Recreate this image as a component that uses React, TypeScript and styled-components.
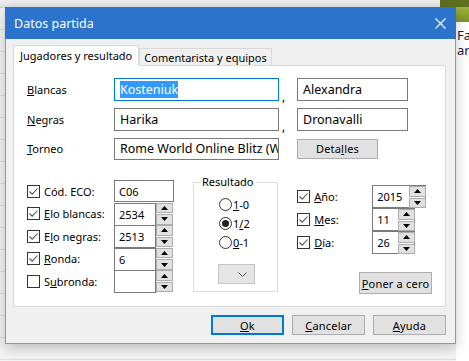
import styled, { createGlobalStyle } from "styled-components";

const GlobalStyle = createGlobalStyle`
  html, body { margin: 0; padding: 0; }
  body {
    width: 469px;
    height: 361px;
    overflow: hidden;
    font-family: "Noto Sans", "Segoe UI", sans-serif;
    font-size: 11px;
    color: #000;
  }
`;

const Desktop = styled.div`
  position: relative;
  width: 469px;
  height: 361px;
  overflow: hidden;
  background: #f4f4f4;
`;

const BackTop = styled.div`
  height: 7px;
  background: linear-gradient(#eeeeee, #e4e4e4);
  border-bottom: 1px solid #d4d4d4;
`;

const BackRows = styled.div`
  display: flex;
  height: 354px;
`;

const BackList = styled.div`
  flex: 1;
  background-color: #f3f3f3;
  background-image: repeating-linear-gradient(
    to bottom,
    transparent 0,
    transparent 21px,
    #dedede 21px,
    #dedede 22px
  );
`;

const BackSide = styled.div`
  width: 12px;
  padding: 20px 0 0 1px;
  background: #fff;
  font-size: 13px;
  line-height: 15px;
  color: #1d1a33;
  white-space: nowrap;
  overflow: hidden;
`;

const Thumb = styled.div`
  position: absolute;
  right: 0;
  top: 0;
  width: 29px;
  height: 22px;
  background: linear-gradient(#5e6f1f 0, #5e6f1f 30%, #9fb437 30%, #7d9328 100%);
`;

const Window = styled.div`
  position: absolute;
  left: 5px;
  top: 7px;
  width: 451px;
  height: 337px;
  box-sizing: border-box;
  background: #f0f0f0;
  border: 1px solid #6f9ee0;
  border-top: none;
  box-shadow: 0 4px 12px rgba(0, 0, 0, 0.22);
  display: flex;
  flex-direction: column;
`;

const TitleBar = styled.div`
  height: 32px;
  margin: 0 -1px;
  background: #2b73cc;
  color: #fff;
  display: flex;
  align-items: center;
  justify-content: space-between;
  padding: 0 10px 0 9px;
  font-size: 12.5px;
`;

const Body = styled.div`
  padding: 6px 9px 0 7px;
`;

const TabStrip = styled.div`
  display: flex;
  align-items: flex-end;
  height: 21px;
  margin-bottom: -1px;
  position: relative;
  z-index: 1;
`;

const Tab = styled.div<{ active?: boolean }>`
  box-sizing: border-box;
  height: ${(p) => (p.active ? "21px" : "18px")};
  padding: 0 ${(p) => (p.active ? "6px" : "4px")};
  border: 1px solid #d9d9d9;
  border-bottom: ${(p) => (p.active ? "1px solid #fff" : "1px solid #d9d9d9")};
  background: ${(p) => (p.active ? "#fff" : "#f0f0f0")};
  display: flex;
  align-items: center;
  white-space: nowrap;
`;

const Panel = styled.div`
  box-sizing: border-box;
  width: 433px;
  height: 242px;
  background: #fff;
  border: 1px solid #d9d9d9;
  padding: 12px 13px 0 13px;
`;

const TopGrid = styled.div`
  display: grid;
  grid-template-columns: 87px 165px 18px 112px;
  grid-auto-rows: 23px;
  row-gap: 6.5px;
  align-items: center;
`;

const Key = styled.span`
  text-decoration: underline;
  text-underline-offset: 1px;
`;

const Label = styled.label`
  white-space: nowrap;
`;

const TextBox = styled.div<{ focused?: boolean; w?: number; h?: number; big?: boolean }>`
  box-sizing: border-box;
  width: ${(p) => (p.w ? `${p.w}px` : "100%")};
  height: ${(p) => (p.h ? `${p.h}px` : "23px")};
  border: 1px solid ${(p) => (p.focused ? "#0078d7" : "#7a7a7a")};
  background: #fff;
  display: flex;
  align-items: center;
  padding: 0 ${(p) => (p.big ? "5px" : "4px")};
  font-size: ${(p) => (p.big ? "12.5px" : "11px")};
  white-space: nowrap;
  overflow: hidden;
`;

const Selected = styled.span`
  background: #3399ff;
  color: #fff;
`;

const Comma = styled.span`
  align-self: end;
  padding-left: 3px;
  line-height: 8px;
  font-size: 12px;
`;

const Button = styled.button<{ w: number; h?: number; primary?: boolean }>`
  box-sizing: border-box;
  width: ${(p) => p.w}px;
  height: ${(p) => p.h ?? 20}px;
  padding: 0;
  background: #e1e1e1;
  border: ${(p) => (p.primary ? "2px solid #0078d7" : "1px solid #adadad")};
  font-family: inherit;
  font-size: 11px;
  color: #000;
  letter-spacing: 0.2px;
`;

const Lower = styled.div`
  display: flex;
  align-items: flex-start;
  margin-top: 20px;
`;

const LeftCol = styled.div`
  width: 146px;
  display: grid;
  grid-template-columns: 87px auto;
  grid-auto-rows: 22.6px;
  align-items: start;
`;

const CheckLabel = styled.label`
  display: flex;
  align-items: center;
  gap: 4px;
  height: 22px;
  white-space: nowrap;
`;

const Box = styled.span`
  box-sizing: border-box;
  width: 13px;
  height: 13px;
  border: 1px solid #333;
  background: #fff;
  display: flex;
  align-items: center;
  justify-content: center;
  flex: none;
`;

const SpinField = styled.div`
  display: flex;
  align-items: flex-start;
`;

const SpinStack = styled.div<{ inset?: boolean }>`
  display: flex;
  flex-direction: column;
  gap: 1px;
  margin: ${(p) => (p.inset ? "1px 1px 0 -17px" : "0")};
`;

const SpinBtn = styled.span`
  box-sizing: border-box;
  width: 17px;
  height: 10.5px;
  background: #e1e1e1;
  border: 1px solid #adadad;
  display: flex;
  align-items: center;
  justify-content: center;
`;

const Group = styled.div`
  box-sizing: border-box;
  width: 86px;
  height: 110px;
  margin: 2px 0 0 20px;
  border: 1px solid #dcdcdc;
  display: flex;
  flex-direction: column;
`;

const Legend = styled.span`
  align-self: flex-start;
  margin: -9px 0 0 6px;
  padding: 0 2px;
  background: #fff;
  line-height: 16px;
`;

const Radios = styled.div`
  display: flex;
  flex-direction: column;
  gap: 4px;
  margin-top: 7px;
  padding-left: 25px;
`;

const RadioRow = styled.label`
  display: flex;
  align-items: center;
  gap: 1px;
  height: 15px;
`;

const Circle = styled.span<{ on?: boolean }>`
  box-sizing: border-box;
  width: 13px;
  height: 13px;
  border-radius: 50%;
  border: 1px solid #333;
  display: flex;
  align-items: center;
  justify-content: center;
  &::after {
    content: "";
    width: 7px;
    height: 7px;
    border-radius: 50%;
    background: ${(p) => (p.on ? "#222" : "transparent")};
  }
`;

const Combo = styled.div`
  box-sizing: border-box;
  width: 37px;
  height: 20px;
  margin: 14px 0 0 24px;
  background: #e5e5e5;
  border: 1px solid #c4c4c4;
  display: flex;
  align-items: center;
  justify-content: flex-end;
  padding-right: 7px;
`;

const RightCol = styled.div`
  width: 136px;
  margin: 5px 0 0 19px;
  display: flex;
  flex-direction: column;
`;

const DateRow = styled.div`
  display: grid;
  grid-template-columns: 75px auto;
  height: 23px;
`;

const ResetRow = styled.div`
  display: flex;
  justify-content: flex-end;
  margin-top: 18px;
`;

const Footer = styled.div`
  display: flex;
  justify-content: flex-end;
  gap: 8px;
  padding: 8px 0 0 0;
`;

const Check = () => (
  <svg width="11" height="11" viewBox="0 0 11 11">
    <path d="M1.5 5.5 L4.2 8.2 L9.5 2.5" fill="none" stroke="#555" strokeWidth="1.1" />
  </svg>
);

const Arrow = ({ up }: { up?: boolean }) => (
  <svg width="7" height="4" viewBox="0 0 7 4">
    <path d={up ? "M0 4 L3.5 0 L7 4 Z" : "M0 0 L3.5 4 L7 0 Z"} fill="#000" />
  </svg>
);

const Spinner = ({ inset }: { inset?: boolean }) => (
  <SpinStack inset={inset}>
    <SpinBtn>
      <Arrow up />
    </SpinBtn>
    <SpinBtn>
      <Arrow />
    </SpinBtn>
  </SpinStack>
);

const CheckItem = ({ checked, children }: { checked?: boolean; children: React.ReactNode }) => (
  <CheckLabel>
    <Box>{checked ? <Check /> : null}</Box>
    <span>{children}</span>
  </CheckLabel>
);

const NumberField = ({ value }: { value: string }) => (
  <SpinField>
    <TextBox w={42} h={23}>{value}</TextBox>
    <Spinner />
  </SpinField>
);

const DateField = ({ label, rest, value, w }: { label: string; rest: string; value: string; w: number }) => (
  <DateRow>
    <CheckLabel>
      <Box>
        <Check />
      </Box>
      <span>
        <Key>{label}</Key>
        {rest}
      </span>
    </CheckLabel>
    <SpinField>
      <TextBox w={w} h={23}>{value}</TextBox>
      <Spinner inset />
    </SpinField>
  </DateRow>
);

const App = () => {
  return (
    <Desktop>
      <GlobalStyle />
      <BackTop />
      <BackRows>
        <BackList />
        <BackSide>
          Faj
          <br />
          aria
        </BackSide>
      </BackRows>
      <Thumb />

      <Window>
        <TitleBar>
          <span>Datos partida</span>
          <svg width="11" height="11" viewBox="0 0 11 11">
            <path d="M0.5 0.5 L10.5 10.5 M10.5 0.5 L0.5 10.5" stroke="#fff" strokeWidth="1.1" />
          </svg>
        </TitleBar>
        <Body>
          <TabStrip>
            <Tab active>Jugadores y resultado</Tab>
            <Tab>Comentarista y equipos</Tab>
          </TabStrip>
          <Panel>
            <TopGrid>
              <Label>
                <Key>B</Key>lancas
              </Label>
              <TextBox focused big>
                <Selected>Kosteniuk</Selected>
              </TextBox>
              <Comma>,</Comma>
              <TextBox big w={111}>Alexandra</TextBox>

              <Label>
                <Key>N</Key>egras
              </Label>
              <TextBox big>Harika</TextBox>
              <Comma>,</Comma>
              <TextBox big w={111}>Dronavalli</TextBox>

              <Label>
                <Key>T</Key>orneo
              </Label>
              <TextBox big h={22}>Rome World Online Blitz (Women)</TextBox>
              <span />
              <Button w={81}>
                Deta<Key>l</Key>les
              </Button>
            </TopGrid>

            <Lower>
              <LeftCol>
                <CheckItem checked>Cód. ECO:</CheckItem>
                <TextBox w={60} h={22}>C06</TextBox>

                <CheckItem checked>
                  <Key>E</Key>lo blancas:
                </CheckItem>
                <NumberField value="2534" />

                <CheckItem checked>
                  E<Key>l</Key>o negras:
                </CheckItem>
                <NumberField value="2513" />

                <CheckItem checked>
                  <Key>R</Key>onda:
                </CheckItem>
                <NumberField value="6" />

                <CheckItem>
                  S<Key>u</Key>bronda:
                </CheckItem>
                <NumberField value="" />
              </LeftCol>

              <Group>
                <Legend>Resultado</Legend>
                <Radios>
                  <RadioRow>
                    <Circle />
                    <span>
                      <Key>1</Key>-0
                    </span>
                  </RadioRow>
                  <RadioRow>
                    <Circle on />
                    <span>
                      1<Key>/</Key>2
                    </span>
                  </RadioRow>
                  <RadioRow>
                    <Circle />
                    <span>
                      <Key>0</Key>-1
                    </span>
                  </RadioRow>
                </Radios>
                <Combo>
                  <svg width="9" height="5" viewBox="0 0 9 5">
                    <path d="M0.5 0.5 L4.5 4.5 L8.5 0.5" fill="none" stroke="#555" />
                  </svg>
                </Combo>
              </Group>

              <RightCol>
                <DateField label="A" rest="ño:" value="2015" w={54} />
                <DateField label="M" rest="es:" value="11" w={43} />
                <DateField label="D" rest="ía:" value="26" w={43} />
                <ResetRow>
                  <Button w={73} h={22}>
                    <Key>P</Key>oner a cero
                  </Button>
                </ResetRow>
              </RightCol>
            </Lower>
          </Panel>
          <Footer>
            <Button w={73} primary>
              <Key>O</Key>k
            </Button>
            <Button w={73}>
              <Key>C</Key>ancelar
            </Button>
            <Button w={73}>
              <Key>A</Key>yuda
            </Button>
          </Footer>
        </Body>
      </Window>
    </Desktop>
  );
};

export default App;
